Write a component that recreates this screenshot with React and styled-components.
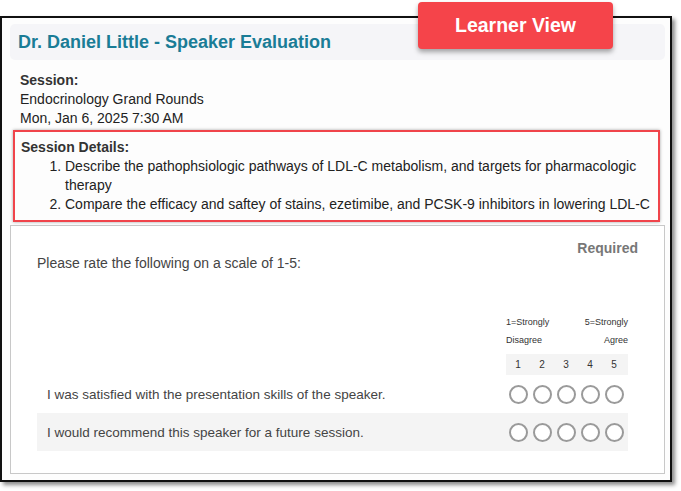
import React from "react";
import styled, { createGlobalStyle } from "styled-components";

const GlobalStyle = createGlobalStyle`
  body {
    margin: 0;
    background: #ffffff;
    font-family: "Liberation Sans", Arial, sans-serif;
    color: #333;
  }
`;

const Page = styled.div`
  position: relative;
  width: 681px;
  height: 491px;
  padding-top: 16px;
  box-sizing: border-box;
`;

const Frame = styled.div`
  width: 672px;
  height: 466px;
  box-sizing: border-box;
  border: 2px solid #111;
  box-shadow: 3px 3px 4px rgba(0, 0, 0, 0.45);
  background: #fdfdfd;
  padding: 6px 5px 6px 8px;
  display: flex;
  flex-direction: column;
`;

const TitleBar = styled.div`
  height: 36px;
  background: #f5f5f8;
  border-radius: 5px;
  display: flex;
  align-items: center;
  padding-left: 8px;
`;

const Title = styled.h1`
  margin: 0;
  font-size: 18px;
  font-weight: bold;
  color: #1a7c96;
`;

const Badge = styled.div`
  position: absolute;
  left: 418px;
  top: 2px;
  width: 195px;
  height: 47px;
  background: #f5444a;
  border-radius: 4px;
  box-shadow: 0 3px 5px rgba(0, 0, 0, 0.35);
  color: #fff;
  font-weight: bold;
  font-size: 19.5px;
  display: flex;
  align-items: center;
  justify-content: center;
`;

const Info = styled.div`
  padding: 11px 0 0 10px;
  font-size: 14px;
  line-height: 19px;
  color: #222;
`;

const Label = styled.div`
  font-weight: bold;
  font-size: 14px;
  color: #333;
`;

const DetailsBox = styled.div`
  margin: 2px 5px 0 3px;
  border: 2px solid #f0444b;
  box-shadow: 0 0 3px rgba(0, 0, 0, 0.35);
  padding: 6px 0 6px 6px;
  font-size: 14px;
  line-height: 19px;
  color: #222;
`;

const Objectives = styled.ol`
  margin: 0;
  padding-left: 44px;
`;

const Card = styled.div`
  margin-top: 3px;
  flex: 1;
  border: 1px solid #c8c8c8;
  background: #fff;
  padding: 14px 26px 0 26px;
  display: flex;
  flex-direction: column;
`;

const Prompt = styled.div`
  display: flex;
  justify-content: space-between;
  align-items: flex-start;
`;

const PromptText = styled.div`
  margin-top: 15px;
  font-size: 14px;
  color: #444;
`;

const Required = styled.div`
  font-size: 14px;
  font-weight: bold;
  color: #777;
`;

const Matrix = styled.div`
  margin-top: 46px;
  width: 591px;
  display: flex;
  flex-direction: column;
`;

const ScaleHead = styled.div`
  align-self: flex-end;
  width: 122px;
  display: grid;
  grid-template-columns: 1fr 1fr;
  font-size: 9px;
  color: #333;
  row-gap: 8px;
`;

const Right = styled.span`
  text-align: right;
`;

const Numbers = styled.div`
  grid-column: 1 / 3;
  display: grid;
  grid-template-columns: repeat(5, 24px);
  height: 21px;
  align-items: center;
  justify-items: center;
  background: #f4f4f4;
  font-size: 10px;
  margin-top: 1px;
`;

const Row = styled.div`
  height: 38px;
  display: flex;
  align-items: center;
  justify-content: space-between;
  padding-left: 10px;
  background: ${(p) => (p.$shade ? "#f4f4f4" : "transparent")};
`;

const Statement = styled.span`
  font-size: 13.5px;
  color: #444;
`;

const Radios = styled.div`
  width: 122px;
  display: grid;
  grid-template-columns: repeat(5, 24px);
  justify-items: center;
`;

const Radio = styled.span`
  width: 15px;
  height: 15px;
  border: 2px solid #9a9a9a;
  border-radius: 50%;
  background: #fff;
`;

const statements = [
  "I was satisfied with the presentation skills of the speaker.",
  "I would recommend this speaker for a future session.",
];

export default function App() {
  return (
    <Page>
      <GlobalStyle />
      <Frame>
        <TitleBar>
          <Title>Dr. Daniel Little - Speaker Evaluation</Title>
        </TitleBar>
        <Info>
          <Label>Session:</Label>
          <div>Endocrinology Grand Rounds</div>
          <div>Mon, Jan 6, 2025 7:30 AM</div>
        </Info>
        <DetailsBox>
          <Label>Session Details:</Label>
          <Objectives>
            <li>
              Describe the pathophsiologic pathways of LDL-C metabolism, and
              targets for pharmacologic therapy
            </li>
            <li>
              Compare the efficacy and saftey of stains, ezetimibe, and PCSK-9
              inhibitors in lowering LDL-C
            </li>
          </Objectives>
        </DetailsBox>
        <Card>
          <Prompt>
            <PromptText>Please rate the following on a scale of 1-5:</PromptText>
            <Required>Required</Required>
          </Prompt>
          <Matrix>
            <ScaleHead>
              <span>1=Strongly</span>
              <Right>5=Strongly</Right>
              <span>Disagree</span>
              <Right>Agree</Right>
              <Numbers>
                {[1, 2, 3, 4, 5].map((n) => (
                  <span key={n}>{n}</span>
                ))}
              </Numbers>
            </ScaleHead>
            {statements.map((s, i) => (
              <Row key={s} $shade={i % 2 === 1}>
                <Statement>{s}</Statement>
                <Radios>
                  {[1, 2, 3, 4, 5].map((n) => (
                    <Radio key={n} />
                  ))}
                </Radios>
              </Row>
            ))}
          </Matrix>
        </Card>
      </Frame>
      <Badge>Learner View</Badge>
    </Page>
  );
}
